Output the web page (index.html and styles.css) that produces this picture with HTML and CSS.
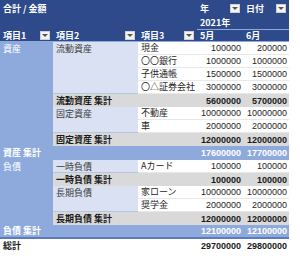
FILE: index.html
```html
<!DOCTYPE html>
<html lang="ja">
<head>
<meta charset="utf-8">
<link rel="stylesheet" href="styles.css">
</head>
<body>
<div class="pivot">
  <div class="h title">合計 / 金額</div>
  <div class="h hd"><span>年</span><i class="dd"></i></div>
  <div class="h hd"><span>日付</span><i class="dd"></i></div>
  <div class="h year">2021年</div>
  <div class="h hd col"><span>項目1</span><i class="dd"></i></div>
  <div class="h hd col"><span>項目2</span><i class="dd"></i></div>
  <div class="h hd col"><span>項目3</span><i class="dd"></i></div>
  <div class="h hd col"><span>5月</span></div>
  <div class="h hd col"><span>6月</span></div>

  <div class="g1 s8">資産</div>
  <div class="g2 s4">流動資産</div>
  <div class="c">現金</div><div class="c n">100000</div><div class="c n">200000</div>
  <div class="c">〇〇銀行</div><div class="c n">1000000</div><div class="c n">1000000</div>
  <div class="c">子供通帳</div><div class="c n">1500000</div><div class="c n">1500000</div>
  <div class="c">〇△証券会社</div><div class="c n">3000000</div><div class="c n">3000000</div>
  <div class="sub w2">流動資産 集計</div><div class="sub n">5600000</div><div class="sub n">5700000</div>
  <div class="g2 s2">固定資産</div>
  <div class="c">不動産</div><div class="c n">10000000</div><div class="c n">10000000</div>
  <div class="c">車</div><div class="c n">2000000</div><div class="c n">2000000</div>
  <div class="sub w2">固定資産 集計</div><div class="sub n">12000000</div><div class="sub n">12000000</div>
  <div class="tot w3">資産 集計</div><div class="tot n">17600000</div><div class="tot n">17700000</div>

  <div class="g1 s5">負債</div>
  <div class="g2">一時負債</div>
  <div class="c">Aカード</div><div class="c n">100000</div><div class="c n">100000</div>
  <div class="sub w2">一時負債 集計</div><div class="sub n">100000</div><div class="sub n">100000</div>
  <div class="g2 s2">長期負債</div>
  <div class="c">家ローン</div><div class="c n">10000000</div><div class="c n">10000000</div>
  <div class="c">奨学金</div><div class="c n">2000000</div><div class="c n">2000000</div>
  <div class="sub w2">長期負債 集計</div><div class="sub n">12000000</div><div class="sub n">12000000</div>
  <div class="tot last w3">負債 集計</div><div class="tot last n">12100000</div><div class="tot last n">12100000</div>

  <div class="grand w3">総計</div><div class="grand n">29700000</div><div class="grand n">29800000</div>
</div>
</body>
</html>
```

FILE: styles.css
```css
html, body {
  margin: 0;
  padding: 0;
  background: #ffffff;
}

.pivot {
  display: grid;
  width: 289px;
  grid-template-columns: 53px 85px 59px 46px 46px;
  grid-template-rows: 17px 13px 12px repeat(8, 13px) 14px repeat(5, 13px) 14px 14px;
  font-family: "Noto Sans CJK JP", "Liberation Sans", sans-serif;
  font-size: 9px;
  color: #262626;
}

.pivot > div {
  box-sizing: border-box;
  display: flex;
  align-items: center;
  padding: 0 3px;
  white-space: nowrap;
  overflow: hidden;
  line-height: 12px;
}

.h {
  background: #2e4a8b;
  color: #ffffff;
  font-weight: 700;
}

.title {
  grid-column: span 3;
  grid-row: span 2;
  align-items: flex-start !important;
  padding-top: 3px !important;
}

.hd {
  justify-content: space-between;
}

.year {
  grid-column: span 2;
  border-bottom: 1px solid #8ea9db;
}

.col {
  border-bottom: 1px solid #8ea9db;
}

.dd {
  display: inline-block;
  box-sizing: border-box;
  width: 10px;
  height: 9px;
  background: #f4f4f4;
  border: 1px solid #d0d0d0;
  position: relative;
  flex: none;
}

.dd::after {
  content: "";
  position: absolute;
  left: 1px;
  top: 2px;
  border-left: 3px solid transparent;
  border-right: 3px solid transparent;
  border-top: 3px solid #555555;
}

.g1 {
  background: #8ea9db;
  color: #ffffff;
  align-items: flex-start !important;
  padding-top: 1px !important;
}

.g2 {
  background: #d9e1f2;
  color: #404040;
  align-items: flex-start !important;
  padding-top: 1px !important;
  border-bottom: 1px solid #b4c6e7;
}

.s2 { grid-row: span 2; }
.s4 { grid-row: span 4; }
.s5 { grid-row: span 5; }
.s8 { grid-row: span 8; }
.w2 { grid-column: span 2; }
.w3 { grid-column: span 3; }

.c {
  background: #ffffff;
  border-bottom: 1px solid #e8e8e8;
}

.n {
  justify-content: flex-end;
  font-family: "Liberation Sans", sans-serif;
  font-size: 9px;
  padding: 0 2px 0 0 !important;
}

.sub {
  background: #d9d9d9;
  font-weight: 700;
  color: #1a1a1a;
}

.tot {
  background: #8ea9db;
  color: #ffffff;
  font-weight: 700;
}

.last {
  border-bottom: 2px solid #5b7bbd;
}

.grand {
  background: #ffffff;
  color: #1a1a1a;
  font-weight: 700;
}
```
